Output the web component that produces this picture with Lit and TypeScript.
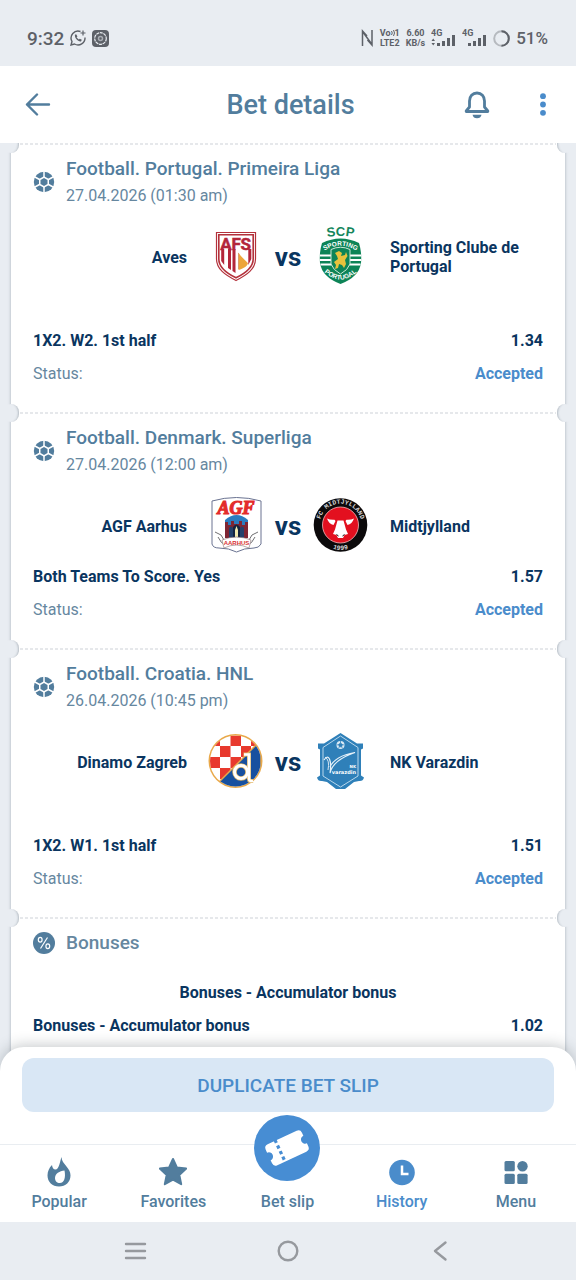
import { LitElement, html, svg, css, nothing } from "lit";
import { customElement, property } from "lit/decorators.js";

interface Team {
  name: string;
  crest: unknown;
}

interface Bet {
  league: string;
  date: string;
  home: Team;
  away: Team;
  spaced: boolean;
  market: string;
  odds: string;
}

const aves = svg`
  <path d="M7.500 3.500H46.500V30C46.500 40 38 46 27 51.500C16 46 7.500 40 7.500 30Z" fill="#fff" stroke="#b3313b" stroke-width="1.200"/>
  <path d="M9.800 5.800H44.200V30C44.200 38 37 44 27 48.800C17 44 9.800 38 9.800 30Z" fill="#fff" stroke="#b3313b" stroke-width="1.600"/>
  <g fill="#b3263a" stroke="#b3263a" stroke-width=".5" font-family="Roboto" font-weight="700" font-size="17">
    <text x="11.200" y="21">A</text>
    <text x="22.500" y="21">F</text>
    <text x="31.500" y="21">S</text>
  </g>
  <path fill="#b3263a" d="M12.200 20h3v16l-3-4zM19 20h3v21l-3-2zM23.500 20h3v24l-3-2zM39.300 20h3v10l-3 6z"/>
  <path d="M29.500 23.500c2 4 8.500 9 9.500 11-1 3-4.500 5-9.500 6.500z" fill="#eda63a"/>
  <path d="M29.500 24v16" stroke="#c9784a" stroke-width=".6"/>`;

const sporting = svg`
  <path id="scp-top" d="M9 9.500Q27.500 4 46 9.500" fill="none"/>
  <path id="scp-mid" d="M11 22Q27.500 11.500 44 22" fill="none"/>
  <path id="scp-low" d="M11 43Q27.500 58 44 43" fill="none"/>
  <path d="M9 14Q27.500 5 46 14Q49 24 48 34Q46 48 27.500 55Q9 48 7 34Q6 24 9 14Z" fill="#0d8457"/>
  <text font-family="Liberation Sans" font-weight="700" font-size="13" fill="#14865c" text-anchor="middle"><textPath href="#scp-top" startOffset="50%">SCP</textPath></text>
  <path d="M7 26.500h41M7 31h41M7.500 35.500h40" stroke="#fff" stroke-width="1.800"/>
  <path d="M18 20.500Q27.500 16 37 20.500V35Q35 41 27.500 45Q20 41 18 35Z" fill="#0d8457" stroke="#cfe6d6" stroke-width="1"/>
  <path d="M22 24l4-2 3 2-1 3 4-1 1-3 1.500 4-2.500 4 1 4-2 4-2-3-3-1-1 4-3 1 1-4-2-3 4-3-1-3z" fill="#e8c23c"/>
  <g font-family="Liberation Sans" font-weight="700" font-size="6.500" fill="#fff" text-anchor="middle">
    <text><textPath href="#scp-mid" startOffset="50%">SPORTING</textPath></text>
    <text><textPath href="#scp-low" startOffset="50%">PORTUGAL</textPath></text>
  </g>`;

const agf = svg`
  <path d="M3 3Q27.500-4 52 3V46Q50 50 45 50Q35 50 27.500 54Q20 50 10 50Q4 50 3 46Z" fill="#fff" stroke="#6a7391" stroke-width="1"/>
  <path d="M16 22Q27.500 12 39 22V40H16Z" fill="#2b7cc0"/>
  <text x="27" y="15.500" text-anchor="middle" font-family="Liberation Serif" font-weight="700" font-style="italic" font-size="18" fill="#e32b2b" stroke="#e32b2b" stroke-width="1.200">AGF</text>
  <path d="M16 40V24h3v3h3v-4h3v3h5v-3h3v4h3v-3h3v16z" fill="#7e2533"/>
  <path d="M20 40V30q2-3 4 0v10zM31 40V30q2-3 4 0v10z" fill="#23406b"/>
  <path d="M24 40V29q3.500-5 7 0v11z" fill="#152440"/>
  <path d="M26 39v-7l1.500-4 1.500 4v7z" fill="#f1e9b0"/>
  <path d="M6 34l6 3 3 5M49 34l-6 3-3 5M9 39q3 7 8 8M46 39q-3 7-8 8" fill="none" stroke="#6f6f72" stroke-width="1"/>
  <path d="M13 42Q27.500 36 42 42L40 50Q27.500 44 15 50Z" fill="#fff" stroke="#8a7072" stroke-width=".6"/>
  <text x="27.500" y="47" text-anchor="middle" font-family="Liberation Sans" font-weight="700" font-size="6" fill="#d8302f">AARHUS</text>`;

const midtjylland = svg`
  <path id="fcm-top" d="M7 30A20.800 20.800 0 1 1 48 30" fill="none"/>
  <path id="fcm-low" d="M12 46.500A24.800 24.800 0 0 0 43 46.500" fill="none"/>
  <circle cx="27.500" cy="27" r="26.800" fill="#0c0a0b"/>
  <circle cx="27.500" cy="27" r="18" fill="#e3101f" stroke="#f2b9bb" stroke-width=".8"/>
  <path d="M14 20.500q3 1.500 7.500 1.200l1 1.300-2 4q-4.500-1-6.500-6.500zM41 20.500q-3 1.500-7.500 1.200l-1 1.300 2 4q4.500-1 6.500-6.500z" fill="#fff"/>
  <path d="M24.500 22.500h6l2.500 9 2 4.500-3.500 1-1.500 3h-5l-1.500-3-3.500-1 2-4.500z" fill="#fff"/>
  <path d="M23.500 36.500l2 1.500M31.500 36.500l-2 1.500" stroke="#0c0a0b" stroke-width="1"/>
  <g font-family="Liberation Mono" font-weight="700" font-size="6.500" fill="#d6d6d8" text-anchor="middle">
    <text><textPath href="#fcm-top" startOffset="50%">FC MIDTJYLLAND</textPath></text>
    <text><textPath href="#fcm-low" startOffset="50%">1999</textPath></text>
  </g>`;

const dinamo = svg`
  <clipPath id="gnk-disc"><circle cx="26.500" cy="27" r="25.500"/></clipPath>
  <circle cx="26.500" cy="27" r="27" fill="#e9a94a"/>
  <g clip-path="url(#gnk-disc)">
    <path d="M0 0h54v54H0z" fill="#fff"/>
    <path d="M0 1.500h11v10.500H0zM21.500 1.500h10.500v10.500H21.500zM42 1.500h10v10.500H42zM11 12h10.500v11H11zM32 12h10v11H32zM0 23h11v11H0zM21.500 23h10.500v11H21.500zM11 34h10.500v11H11z" fill="#e8392d"/>
    <path d="M8 50L52 6V54H8z" fill="#17509f" stroke="#e9a94a" stroke-width="1.500"/>
  </g>
  <circle cx="32" cy="38" r="6.500" fill="none" stroke="#e3b96b" stroke-width="4.500"/>
  <path d="M34.500 20.500h5.500v25q0 2 4 1.500" fill="none" stroke="#e3b96b" stroke-width="4"/>
  <circle cx="32" cy="38" r="6.500" fill="none" stroke="#fff" stroke-width="3"/>
  <path d="M35 20.500h5v24q0 3 4 2.500" fill="none" stroke="#fff" stroke-width="2.600"/>`;

const varazdin = svg`
  <path d="M27.500-1L44 9.500h6v5l-2 1v26l3 2q-1 4-5 3.500l-5 1-9 7h-9l-9-7-5-1q-4 .5-5-3.500l3-2V15.500l-2-1v-5h6z" fill="#2f80b9"/>
  <path d="M27.500 2L45 13.500V42L27.500 53L10 42V13.500Z" fill="#2f80b9" stroke="#b9d7ec" stroke-width="1"/>
  <circle cx="27.500" cy="11" r="4" fill="#dbeaf5"/>
  <path d="M27.500 9l2 1.500-.8 2.300h-2.400l-.8-2.300zM27.500 7v2M24 11l1.500-.5M31 11l-1.500-.5M25.500 14.500l.8-1.700M29.500 14.500l-.8-1.700" fill="#2f80b9" stroke="#2f80b9" stroke-width=".7"/>
  <path d="M11 26q3-5 5.500-1 2 5 .5 14Q20 26 42 18.500Q22 22 17 33" fill="none" stroke="#e6f1f9" stroke-width="1.200"/>
  <path d="M12 23q5 3 3 13" fill="none" stroke="#e6f1f9" stroke-width=".9"/>
  <g font-family="DejaVu Sans" font-weight="700" fill="#fff" text-anchor="end">
    <text x="43" y="34" font-size="4">NK</text>
    <text x="43" y="40" font-size="5">varazdin</text>
  </g>`;

const BETS: Bet[] = [
  {
    league: "Football. Portugal. Primeira Liga",
    date: "27.04.2026 (01:30 am)",
    home: { name: "Aves", crest: aves },
    away: { name: "Sporting Clube de Portugal", crest: sporting },
    spaced: true,
    market: "1X2. W2. 1st half",
    odds: "1.34",
  },
  {
    league: "Football. Denmark. Superliga",
    date: "27.04.2026 (12:00 am)",
    home: { name: "AGF Aarhus", crest: agf },
    away: { name: "Midtjylland", crest: midtjylland },
    spaced: false,
    market: "Both Teams To Score. Yes",
    odds: "1.57",
  },
  {
    league: "Football. Croatia. HNL",
    date: "26.04.2026 (10:45 pm)",
    home: { name: "Dinamo Zagreb", crest: dinamo },
    away: { name: "NK Varazdin", crest: varazdin },
    spaced: true,
    market: "1X2. W1. 1st half",
    odds: "1.51",
  },
];

const crestBox = (art: unknown) =>
  html`<svg class="crest" viewBox="0 0 54 54" aria-hidden="true">${art}</svg>`;

const ballIcon = html`<svg class="lead" viewBox="0 0 22 22" aria-hidden="true">
  <circle cx="11" cy="11" r="10.200" fill="#527d9d"/>
  <path d="M11 5.200l5 2.900v5.800L11 16.800l-5-2.900V8.100z" fill="#fff"/>
  <path d="M6.500 8.500L1 5.500M15.500 8.500L21 5.500M6.500 13.500L1 16.500M15.500 13.500L21 16.500M11 6V0M11 16v6" stroke="#fff" stroke-width="1.500"/>
  <path d="M11 7l3.500 2v4L11 15l-3.500-2V9z" fill="#527d9d"/>
</svg>`;

@customElement("bet-section")
export class BetSection extends LitElement {
  @property({ attribute: false }) bet!: Bet;

  static styles = css`
    :host {
      display: block;
      padding: 13px 22px 22px;
    }
    .head {
      display: grid;
      grid-template-columns: 22px 1fr;
      column-gap: 11px;
      align-items: start;
    }
    .lead {
      width: 22px;
      height: 22px;
      margin-top: 15px;
    }
    .league {
      margin: 0;
      font-size: 19px;
      font-weight: 500;
      line-height: 26px;
      color: #527d9d;
    }
    .date {
      font-size: 16px;
      line-height: 28px;
      color: #66879f;
    }
    .teams {
      display: grid;
      grid-template-columns: 1fr 54px 50px 54px 1fr;
      align-items: center;
      height: 70px;
      margin-top: 11px;
    }
    .team {
      padding-top: 2px;
      font-size: 16px;
      font-weight: 700;
      line-height: 19px;
      color: #0a3560;
    }
    .home {
      text-align: right;
      padding-right: 22px;
    }
    .away {
      padding-left: 23px;
    }
    .crest {
      width: 54px;
      height: 54px;
      overflow: visible;
    }
    .vs {
      padding-top: 2px;
      text-align: center;
      font-size: 26px;
      font-weight: 700;
      line-height: 28px;
      color: #0a3560;
    }
    .row {
      display: flex;
      justify-content: space-between;
      font-size: 16px;
      line-height: 33px;
      font-weight: 700;
      color: #0a3560;
    }
    .spaced {
      margin-top: 33px;
    }
    .label {
      font-weight: 400;
      color: #66879f;
    }
    .accepted {
      color: #4a8ccb;
    }
  `;

  render() {
    const b = this.bet;
    return html`
      <div class="head">
        ${ballIcon}
        <div>
          <h2 class="league">${b.league}</h2>
          <div class="date">${b.date}</div>
        </div>
      </div>
      <div class="teams">
        <span class="team home">${b.home.name}</span>
        ${crestBox(b.home.crest)}
        <span class="vs">vs</span>
        ${crestBox(b.away.crest)}
        <span class="team away">${b.away.name}</span>
      </div>
      <div class="row ${b.spaced ? "spaced" : ""}">
        <span>${b.market}</span><span>${b.odds}</span>
      </div>
      <div class="row">
        <span class="label">Status:</span><span class="accepted">Accepted</span>
      </div>
    `;
  }
}

const NAV = [
  {
    label: "Popular",
    icon: svg`<path fill="currentColor" fill-rule="evenodd" d="M16.500 0c.2 4 2.200 6 5 9.500 2.500 3 4 5.500 4 9 0 6.500-4.800 11-11.500 11S2.500 25 2.500 18.500c0-4 1.500-7.500 4.500-10.500.3 2.500 1.300 4.500 3.500 4.500 3.500 0 4.500-8 6-12.500zM19.500 13.500c-5 .5-9.500 3-9.500 7.500 0 3 2 5 4.800 5 4.700 0 6-6 4.700-12.500z"/>`,
  },
  {
    label: "Favorites",
    icon: svg`<path fill="currentColor" stroke="currentColor" stroke-width="2" stroke-linejoin="round" d="M14 2l3.900 8.500 9.300 1.100-6.900 6.400 1.900 9.200-8.200-4.600-8.200 4.600 1.900-9.200L.8 11.600l9.300-1.100z"/>`,
  },
  { label: "Bet slip", icon: null },
  {
    label: "History",
    active: true,
    icon: svg`<circle cx="14" cy="15.500" r="12.800" fill="currentColor"/><path d="M14 8.500v8.500h6.500" fill="none" stroke="#fff" stroke-width="2.500"/>`,
  },
  {
    label: "Menu",
    icon: svg`<g fill="currentColor"><rect x="2.500" y="4" width="10.300" height="10.300" rx="1.500"/><circle cx="20.500" cy="9.200" r="5.200"/><rect x="2.500" y="16.800" width="10.300" height="10.300" rx="1.500"/><rect x="15.300" y="16.800" width="10.300" height="10.300" rx="1.500"/></g>`,
  },
];

@customElement("app-root")
export class AppRoot extends LitElement {
  static styles = css`
    :host {
      display: flex;
      flex-direction: column;
      height: 100vh;
      overflow: hidden;
      background: #e9edf2;
      font-family: Roboto, "Noto Sans", sans-serif;
    }
    button {
      font: inherit;
      border: 0;
      padding: 0;
      background: none;
      color: inherit;
      cursor: pointer;
    }
    svg {
      display: block;
    }
    .status {
      flex: none;
      display: flex;
      align-items: center;
      justify-content: space-between;
      box-sizing: border-box;
      height: 66px;
      padding: 10px 28px 0 27px;
      color: #5d6168;
    }
    .cluster {
      display: flex;
      align-items: center;
      gap: 6px;
    }
    .clock {
      font-size: 19px;
      font-weight: 500;
    }
    .battery {
      font-size: 17px;
      font-weight: 500;
    }
    .tiny {
      display: flex;
      flex-direction: column;
      align-items: center;
      font-size: 9px;
      line-height: 10px;
      font-weight: 700;
    }
    .volte {
      display: flex;
      align-items: center;
    }
    .header {
      flex: none;
      display: grid;
      grid-template-columns: 1fr auto 1fr;
      align-items: center;
      height: 77px;
      padding: 0 20px 0 25px;
      background: #fff;
      color: #527d9d;
    }
    .title {
      margin: 0;
      font-size: 27px;
      font-weight: 500;
      line-height: 32px;
    }
    .actions {
      display: flex;
      justify-content: flex-end;
      align-items: center;
      gap: 50px;
      padding-right: 10px;
    }
    .more {
      color: #4a8ccb;
    }
    .scroller {
      flex: 1;
      min-height: 0;
      overflow: hidden auto;
      scrollbar-width: none;
      padding: 0 11px;
      background: #e9edf2;
    }
    .card {
      min-height: 100%;
      background: #fff;
      box-shadow: 0 0 3px rgba(70, 85, 100, 0.4);
    }
    .tear {
      position: relative;
      height: 0;
    }
    .tear::before,
    .tear::after {
      content: "";
      position: absolute;
      top: -8px;
      width: 16px;
      height: 18px;
      border-radius: 9px;
      background: #e9edf2;
    }
    .tear::before {
      left: -8px;
      box-shadow: inset -3px 0 2px -2px rgba(70, 85, 100, 0.3);
    }
    .tear::after {
      right: -8px;
      box-shadow: inset 3px 0 2px -2px rgba(70, 85, 100, 0.3);
    }
    .dashes {
      height: 2px;
      margin: 0 9px;
      background: repeating-linear-gradient(90deg, #e6e8eb 0 3px, #fff 3px 5px);
    }
    .bonus {
      padding: 13px 22px 32px;
      color: #0a3560;
    }
    .bonus-head {
      display: grid;
      grid-template-columns: 22px 1fr;
      column-gap: 11px;
      align-items: center;
      margin-bottom: 20px;
    }
    .bonus-title {
      margin: 0;
      font-size: 19px;
      font-weight: 500;
      line-height: 26px;
      color: #66879f;
    }
    .bonus-row {
      display: flex;
      justify-content: space-between;
      font-size: 16px;
      font-weight: 700;
      line-height: 33px;
    }
    .middle {
      justify-content: center;
    }
    .sheet {
      flex: none;
      position: relative;
      margin-top: -24px;
      padding: 11px 22px 32px;
      border-radius: 24px 24px 0 0;
      background: #fff;
      box-shadow: 0 -2px 14px rgba(40, 50, 60, 0.25);
    }
    .duplicate {
      display: block;
      width: 100%;
      height: 54px;
      border-radius: 12px;
      background: #d9e7f5;
      color: #4a8ccb;
      font-size: 19px;
      font-weight: 500;
    }
    .nav {
      flex: none;
      position: relative;
      display: grid;
      grid-template-columns: repeat(5, 1fr);
      height: 77px;
      padding: 0 3px 0 2px;
      border-top: 1px solid #e9edf1;
      background: #fff;
    }
    .tab {
      position: relative;
      display: flex;
      flex-direction: column;
      align-items: center;
      gap: 3px;
      padding-top: 12px;
      text-decoration: none;
      color: #527d9d;
      font-size: 16px;
      font-weight: 500;
      line-height: 24px;
    }
    .active {
      color: #4a8ccb;
    }
    .glyph {
      width: 28px;
      height: 30px;
    }
    .fab {
      position: absolute;
      top: -30px;
      width: 66px;
      height: 66px;
    }
    .system {
      flex: none;
      display: flex;
      justify-content: center;
      align-items: center;
      gap: 128px;
      height: 58px;
      background: #e9edf2;
      color: #96999e;
    }
  `;

  render() {
    return html`
      <div class="status">
        <div class="cluster">
          <span class="clock">9:32</span>
          <svg width="16" height="16" viewBox="0 0 16 16" fill="none" stroke="currentColor" stroke-width="1.400">
            <path d="M10.500 1.500A7 7 0 0 0 2 11.500L1 15l3.500-1A7 7 0 0 0 15 7.500"/>
            <path d="M13 .5v5M10.500 3h5" stroke-width="1.200"/>
            <path d="M5 4.500c-1 3 3 7.500 6 7l.8-1.700-2-1-1 .8-2.200-2.200.8-1-1-2z" fill="currentColor" stroke="none"/>
          </svg>
          <svg width="17" height="17" viewBox="0 0 17 17">
            <rect width="17" height="17" rx="4" fill="currentColor"/>
            <circle cx="8.500" cy="8.500" r="5.800" fill="none" stroke="#e9edf2" stroke-width="1.200" stroke-dasharray="3 .7"/>
            <circle cx="8.500" cy="8.500" r="2" fill="none" stroke="#a9adb3" stroke-width="1.500"/>
          </svg>
        </div>
        <div class="cluster">
          <svg width="13" height="18" viewBox="0 0 13 18" fill="none" stroke="currentColor" stroke-width="1.500">
            <path d="M1.500 17V2l4.500 5M11 1v15l-4.500-5M1.500 2.500L11 15.500"/>
          </svg>
          <span class="tiny">
            <span class="volte">Vo<svg width="4" height="8" viewBox="0 0 4 8" fill="none" stroke="currentColor"><path d="M.5 2q1.500 2 0 4M2.500 1q2 3 0 6"/></svg>1</span>
            <span>LTE2</span>
          </span>
          <span class="tiny"><span>6.60</span><span>KB/s</span></span>
          <svg width="25" height="18" viewBox="0 0 25 18" fill="currentColor">
            <text x="0" y="7" font-size="9" font-weight="700">4G</text>
            <path d="M.5 12l1.700-2.500L4 12zM.5 14l1.700 2.500L4 14zM6 14h3v3H6zM11 12h3v5h-3zM16 9h3v8h-3zM21 6h3v11h-3z"/>
          </svg>
          <svg width="25" height="18" viewBox="0 0 25 18" fill="currentColor">
            <text x="0" y="7" font-size="9" font-weight="700">4G</text>
            <path d="M6 14h3v3H6zM11 12h3v5h-3zM16 9h3v8h-3zM21 6h3v11h-3z"/>
          </svg>
          <svg width="17" height="17" viewBox="0 0 17 17" fill="none" stroke-width="2">
            <circle cx="8.500" cy="8.500" r="7.300" stroke="#b6babf"/>
            <path d="M8.500 1.200a7.300 7.300 0 0 1 0 14.600" stroke="currentColor"/>
          </svg>
          <span class="battery">51%</span>
        </div>
      </div>

      <header class="header">
        <button aria-label="Back">
          <svg width="26" height="24" viewBox="0 0 26 24" fill="none" stroke="currentColor" stroke-width="2.400" stroke-linecap="round" stroke-linejoin="round">
            <path d="M24 11.500H2M12 1.500L2 11.500l10 10"/>
          </svg>
        </button>
        <h1 class="title">Bet details</h1>
        <div class="actions">
          <button aria-label="Notifications">
            <svg width="26" height="28" viewBox="0 0 26 28" fill="none" stroke="currentColor" stroke-width="2.800" stroke-linejoin="round">
              <path d="M13 2C8.500 2 5.500 5.500 5.500 10v6L2.200 20v.5h21.600V20l-3.300-4v-6C20.500 5.500 17.500 2 13 2z"/>
              <path d="M8.500 23.800h9c-.5 2.500-2 3.500-4.500 3.500S9 26.300 8.500 23.800z" fill="currentColor" stroke="none"/>
            </svg>
          </button>
          <button class="more" aria-label="More">
            <svg width="6" height="24" viewBox="0 0 6 24" fill="currentColor">
              <circle cx="3" cy="3.200" r="2.900"/><circle cx="3" cy="11.500" r="2.900"/><circle cx="3" cy="19.800" r="2.900"/>
            </svg>
          </button>
        </div>
      </header>

      <main class="scroller">
        <div class="card">
          ${BETS.map(
            (bet) => html`
              <div class="tear"><div class="dashes"></div></div>
              <bet-section .bet=${bet}></bet-section>
            `
          )}
          <div class="tear"><div class="dashes"></div></div>
          <section class="bonus">
            <div class="bonus-head">
              <svg width="22" height="22" viewBox="0 0 22 22">
                <circle cx="11" cy="11" r="11" fill="#527d9d"/>
                <g fill="none" stroke="#fff" stroke-width="1.200">
                  <ellipse cx="7.200" cy="7.800" rx="1.900" ry="2.400"/><ellipse cx="14.800" cy="14.200" rx="1.900" ry="2.400"/><path d="M14.500 5.500l-7 11"/>
                </g>
              </svg>
              <h2 class="bonus-title">Bonuses</h2>
            </div>
            <div class="bonus-row middle">Bonuses - Accumulator bonus</div>
            <div class="bonus-row"><span>Bonuses - Accumulator bonus</span><span>1.02</span></div>
          </section>
        </div>
      </main>

      <div class="sheet">
        <button class="duplicate">DUPLICATE BET SLIP</button>
      </div>

      <nav class="nav">
        ${NAV.map(
          (item) => html`
            <a class="tab ${item.active ? "active" : ""}" href="#" aria-current=${item.active ? "page" : nothing}>
              <svg class="glyph" viewBox="0 0 28 30" aria-hidden="true">${item.icon}</svg>
              ${item.icon
                ? nothing
                : html`<svg class="fab" viewBox="0 0 66 66" aria-hidden="true">
                    <circle cx="33" cy="33" r="33" fill="#478dd3"/>
                    <g transform="rotate(-25 33 33)">
                      <path fill="#fff" d="M17 21.500h32q4 0 4 4v3.300a4.200 4.200 0 0 0 0 8.400v3.300q0 4-4 4H17q-4 0-4-4v-3.300a4.200 4.200 0 0 0 0-8.400v-3.300q0-4 4-4z"/>
                      <path d="M25.500 20.500v25" stroke="#478dd3" stroke-width="3.200" stroke-dasharray="3.400 2.800"/>
                    </g>
                  </svg>`}
              <span>${item.label}</span>
            </a>
          `
        )}
      </nav>

      <div class="system">
        <button aria-label="Recent apps">
          <svg width="24" height="24" viewBox="0 0 24 24" stroke="currentColor" stroke-width="2.400" stroke-linecap="round"><path d="M2 5h19M2 12h19M2 19h19"/></svg>
        </button>
        <button aria-label="Home">
          <svg width="24" height="24" viewBox="0 0 24 24" fill="none" stroke="currentColor" stroke-width="2.400"><circle cx="12" cy="12" r="9.300"/></svg>
        </button>
        <button aria-label="Go back">
          <svg width="24" height="24" viewBox="0 0 24 24" fill="none" stroke="currentColor" stroke-width="2.400" stroke-linecap="round" stroke-linejoin="round"><path d="M17.500 3.500L7 12l10.500 8.500"/></svg>
        </button>
      </div>
    `;
  }
}
